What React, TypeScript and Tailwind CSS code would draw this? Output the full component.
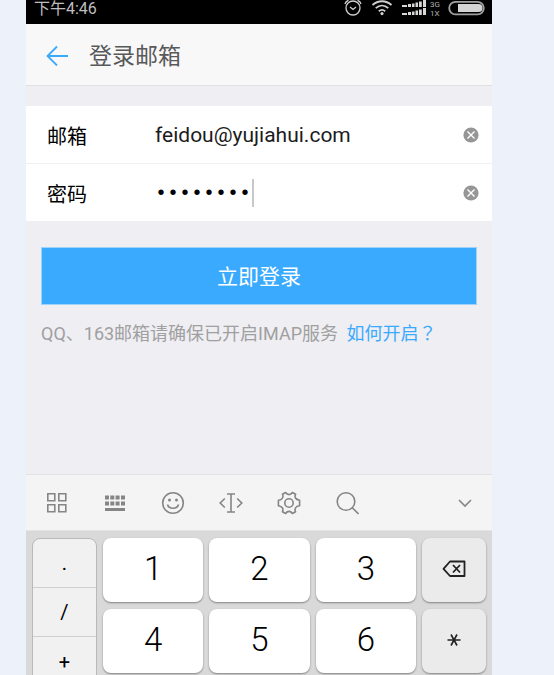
import { useState } from "react";

const bodyFont = "font-['Roboto','Noto_Sans_CJK_SC',sans-serif]";

function StatusBar() {
  return (
    <div className="flex h-6 shrink-0 items-start justify-between bg-black pl-2 pr-1.5 text-[#bfbfbf]">
      <span className="text-base leading-[18px]">下午4:46</span>
      <div className="flex h-4 items-center">
        <svg width="20" height="16" viewBox="0 0 20 16" fill="none" stroke="#d0d0d0" strokeWidth="1.3" aria-hidden="true">
          <circle cx="11" cy="8" r="7" />
          <path d="M8 7l3 2.400L14 7M3 4C3.500 2 4.800 .8 6.500 .3M19 4C18.500 2 17.200 .8 15.500 .3" />
        </svg>
        <svg className="ml-[9px]" width="22" height="16" viewBox="0 0 22 16" fill="none" stroke="#d0d0d0" strokeWidth="1.8" aria-hidden="true">
          <path d="M1.500 5C7 0 15 0 20.500 5M4.700 8.200C8.500 4.800 13.500 4.800 17.300 8.200M7.800 11.200C9.800 9.500 12.200 9.500 14.200 11.200" />
          <circle cx="11" cy="13.600" r="1.600" fill="#d0d0d0" stroke="none" />
        </svg>
        <svg className="ml-[9px]" width="24" height="16" viewBox="0 0 24 16" fill="#d8d8d8" aria-hidden="true">
          <path d="M0 5h5v2H0zM6 4h3v3H6zM10 3.500h2.500v3.500H10zM13.500 2.500H16V7h-2.500zM17 1.500h2.800V7H17zM21 0h3v7h-3z" />
          <path d="M0 13h5v2H0zM6 12h3v3H6zM10 11.500h2.500v3.500H10zM13.500 10.500H16V15h-2.500zM17 9.500h2.800V15H17zM21 8h3v7h-3z" />
        </svg>
        <div className="ml-1 flex w-3 flex-col pt-0.5 text-[8px] leading-[9px] text-[#b0b0b0]">
          <span>3G</span>
          <span>1X</span>
        </div>
        <svg className="ml-[6px]" width="38" height="16" viewBox="0 0 38 16" aria-hidden="true">
          <rect x="1.200" y="1.800" width="34.600" height="12.600" rx="6.300" fill="#000" stroke="#a0a0a0" strokeWidth="1.800" />
          <path d="M10 4h20.500a4 4 0 0 1 0 8H10z" fill="#d4d4d4" />
        </svg>
      </div>
    </div>
  );
}

function ClearButton({ label, onClick }: { label: string; onClick: () => void }) {
  return (
    <button type="button" aria-label={label} onClick={onClick} className="ml-auto mr-[13px] shrink-0">
      <svg width="16" height="16" viewBox="0 0 16 16" className="block">
        <circle cx="8" cy="8" r="7.600" fill="#969696" />
        <path d="M4.500 4.500l7 7M11.500 4.500l-7 7" stroke="#fff" strokeWidth="1.400" />
      </svg>
    </button>
  );
}

const tools = [
  {
    name: "面板",
    icon: <path d="M2.800 2.800h7v7h-7zM13.800 2.800h7v7h-7zM2.800 13.800h7v7h-7zM13.800 13.800h7v7h-7z" />,
  },
  {
    name: "键盘",
    icon: (
      <g fill="#858585" stroke="none">
        <path d="M2 4.500h4v4H2zM7.300 4.500h4v4h-4zM12.600 4.500h4v4h-4zM18 4.500h4v4h-4zM2 10.500h4v4H2zM7.300 10.500h4v4h-4zM12.600 10.500h4v4h-4zM18 10.500h4v4h-4zM2 17h20v3H2z" />
      </g>
    ),
  },
  {
    name: "表情",
    icon: (
      <g>
        <circle cx="12" cy="12" r="10.300" />
        <path d="M6.500 13.500c1.200 5 9.800 5 11 0" />
        <circle cx="8.500" cy="9" r="1.500" fill="#858585" stroke="none" />
        <circle cx="15.500" cy="9" r="1.500" fill="#858585" stroke="none" />
      </g>
    ),
  },
  {
    name: "光标",
    icon: <path d="M5.800 7.500L1.200 12l4.600 4.500M18.200 7.500l4.600 4.500-4.600 4.500M8 3h8M8 21h8M12 3v18" />,
  },
  {
    name: "设置",
    icon: (
      <g strokeLinejoin="round">
        <path d="M8.600 1.500Q10 3.600 12 3.600T15.400 1.500L18.600 3.200Q17.600 5.400 18.500 7T22.600 9.300V14.700Q19.500 15 18.500 17T18.600 20.800L15.400 22.500Q14 20.400 12 20.400T8.600 22.500L5.400 20.800Q6.400 18.600 5.500 17T1.400 14.700V9.300Q4.500 9 5.500 7T5.400 3.200z" />
        <circle cx="12" cy="12" r="4.200" />
      </g>
    ),
  },
  {
    name: "搜索",
    icon: (
      <g>
        <circle cx="11" cy="10.500" r="8.800" />
        <path d="M17 16.500l6.500 6.500" />
      </g>
    ),
  },
];

function Toolbar() {
  return (
    <div className="flex h-14 shrink-0 items-center border-t border-[#e2e2e4] bg-[#f4f4f4] pl-[19px] pr-[18px]">
      <div className="flex gap-[34px]">
        {tools.map((tool) => (
          <button key={tool.name} type="button" aria-label={tool.name}>
            <svg width="24" height="24" viewBox="0 0 24 24" fill="none" stroke="#858585" strokeWidth="1.600" className="block">
              {tool.icon}
            </svg>
          </button>
        ))}
      </div>
      <button type="button" aria-label="收起键盘" className="ml-auto">
        <svg width="18" height="18" viewBox="0 0 18 18" fill="none" stroke="#858585" strokeWidth="1.600" className="block">
          <path d="M3 6l6 6 6-6" />
        </svg>
      </button>
    </div>
  );
}

const keyShadow = "rounded-lg shadow-[0_1px_2px_rgba(0,0,0,0.4)]";

function Keypad() {
  return (
    <div className="flex h-[145px] shrink-0 gap-1.5 overflow-hidden border-t border-[#e4e4e4] bg-[#d9d9d9] px-1.5 pt-[7px]">
      <div className="flex h-[205px] w-[65px] shrink-0 flex-col divide-y divide-[#cfcfcf] rounded-lg border border-[#b9b9b9] bg-[#f1f1f1] text-xl">
        {[".", "/", "+"].map((key) => (
          <button key={key} type="button" className="h-[49px] shrink-0 leading-6">
            {key}
          </button>
        ))}
      </div>
      <div className="grid flex-1 auto-rows-[64px] grid-cols-3 gap-x-1.5 gap-y-[7px]">
        {["1", "2", "3", "4", "5", "6"].map((key) => (
          <button key={key} type="button" className={`bg-white pb-0.5 text-[33px] leading-[40px] font-light ${keyShadow}`}>
            {key}
          </button>
        ))}
      </div>
      <div className="grid w-16 shrink-0 auto-rows-[64px] gap-y-[7px]">
        <button type="button" aria-label="删除" className={`flex items-center justify-center bg-[#ebebeb] pb-0.5 ${keyShadow}`}>
          <svg width="24" height="18" viewBox="0 0 24 18" fill="none" stroke="#222" strokeWidth="1.800" strokeLinejoin="round">
            <path d="M8 1.500h14.500v14.500H8L1.500 8.800zM11 5l7 7.500M18 5l-7 7.500" />
          </svg>
        </button>
        <button type="button" aria-label="星号" className={`flex items-center justify-center bg-[#ebebeb] pb-0.5 ${keyShadow}`}>
          <svg width="14" height="14" viewBox="0 0 14 14" fill="none" stroke="#222" strokeWidth="1.600">
            <path d="M.5 7h13M4 1.500l6 11M10 1.500l-6 11" />
          </svg>
        </button>
      </div>
    </div>
  );
}

export default function App() {
  const [email, setEmail] = useState("feidou@yujiahui.com");
  const [password, setPassword] = useState("password");

  return (
    <div className={`h-screen overflow-hidden bg-[#ecf1fa] pl-[26px] pr-[62px] ${bodyFont}`}>
      <div className="flex h-full flex-col bg-[#efeef3]">
        <StatusBar />
        <header className="flex h-[62px] shrink-0 items-center border-b border-[#e0e0e2] bg-[#f8f8f8] pl-5">
          <button type="button" aria-label="返回">
            <svg width="22" height="22" viewBox="0 0 22 22" fill="none" stroke="#3aaaff" strokeWidth="1.800" className="block">
              <path d="M11 2.500L1.500 12l9.500 9.500M1.500 12H22" />
            </svg>
          </button>
          <h1 className="ml-[21px] pt-1 text-[23px] leading-8 text-[#58595b]">登录邮箱</h1>
        </header>
        <form className="flex flex-1 flex-col pt-5" onSubmit={(event) => event.preventDefault()}>
          <div className="divide-y divide-[#f0f0f2] bg-white">
            <div className="flex h-[58px] items-center pl-[21px]">
              <label htmlFor="email" className="w-[108px] shrink-0 pt-1 text-xl">邮箱</label>
              <input
                id="email"
                type="text"
                value={email}
                onChange={(event) => setEmail(event.target.value)}
                className="min-w-0 flex-1 pt-0.5 text-[21px] text-[#1c1c1c] outline-none"
              />
              <ClearButton label="清除邮箱" onClick={() => setEmail("")} />
            </div>
            <div className="flex h-[57px] items-center pl-[21px]">
              <label htmlFor="password" className="w-[108px] shrink-0 pt-1 text-xl">密码</label>
              <input
                id="password"
                type="password"
                value={password}
                onChange={(event) => setPassword(event.target.value)}
                className="w-[97px] pt-0.5 font-['Liberation_Mono',monospace] text-xl outline-none"
              />
              <span className="h-7 w-0.5 bg-[#c8c8c8]" />
              <ClearButton label="清除密码" onClick={() => setPassword("")} />
            </div>
          </div>
          <div className="px-[15px] pt-[26px]">
            <button type="submit" className="h-[58px] w-full border border-[#9fd2fb] bg-[#3aaaff] pt-1 text-[21px] text-white">
              立即登录
            </button>
            <p className="mt-3.5 text-lg leading-[26px] whitespace-nowrap text-[#a0a0a0]">
              QQ、163邮箱请确保已开启IMAP服务{" "}
              <a href="#imap" className="ml-1 text-[#3aaaff]">
                如何开启<span lang="zh-TW" className="font-['Noto_Sans_CJK_TC',sans-serif]">？</span>
              </a>
            </p>
          </div>
        </form>
        <Toolbar />
        <Keypad />
      </div>
    </div>
  );
}
